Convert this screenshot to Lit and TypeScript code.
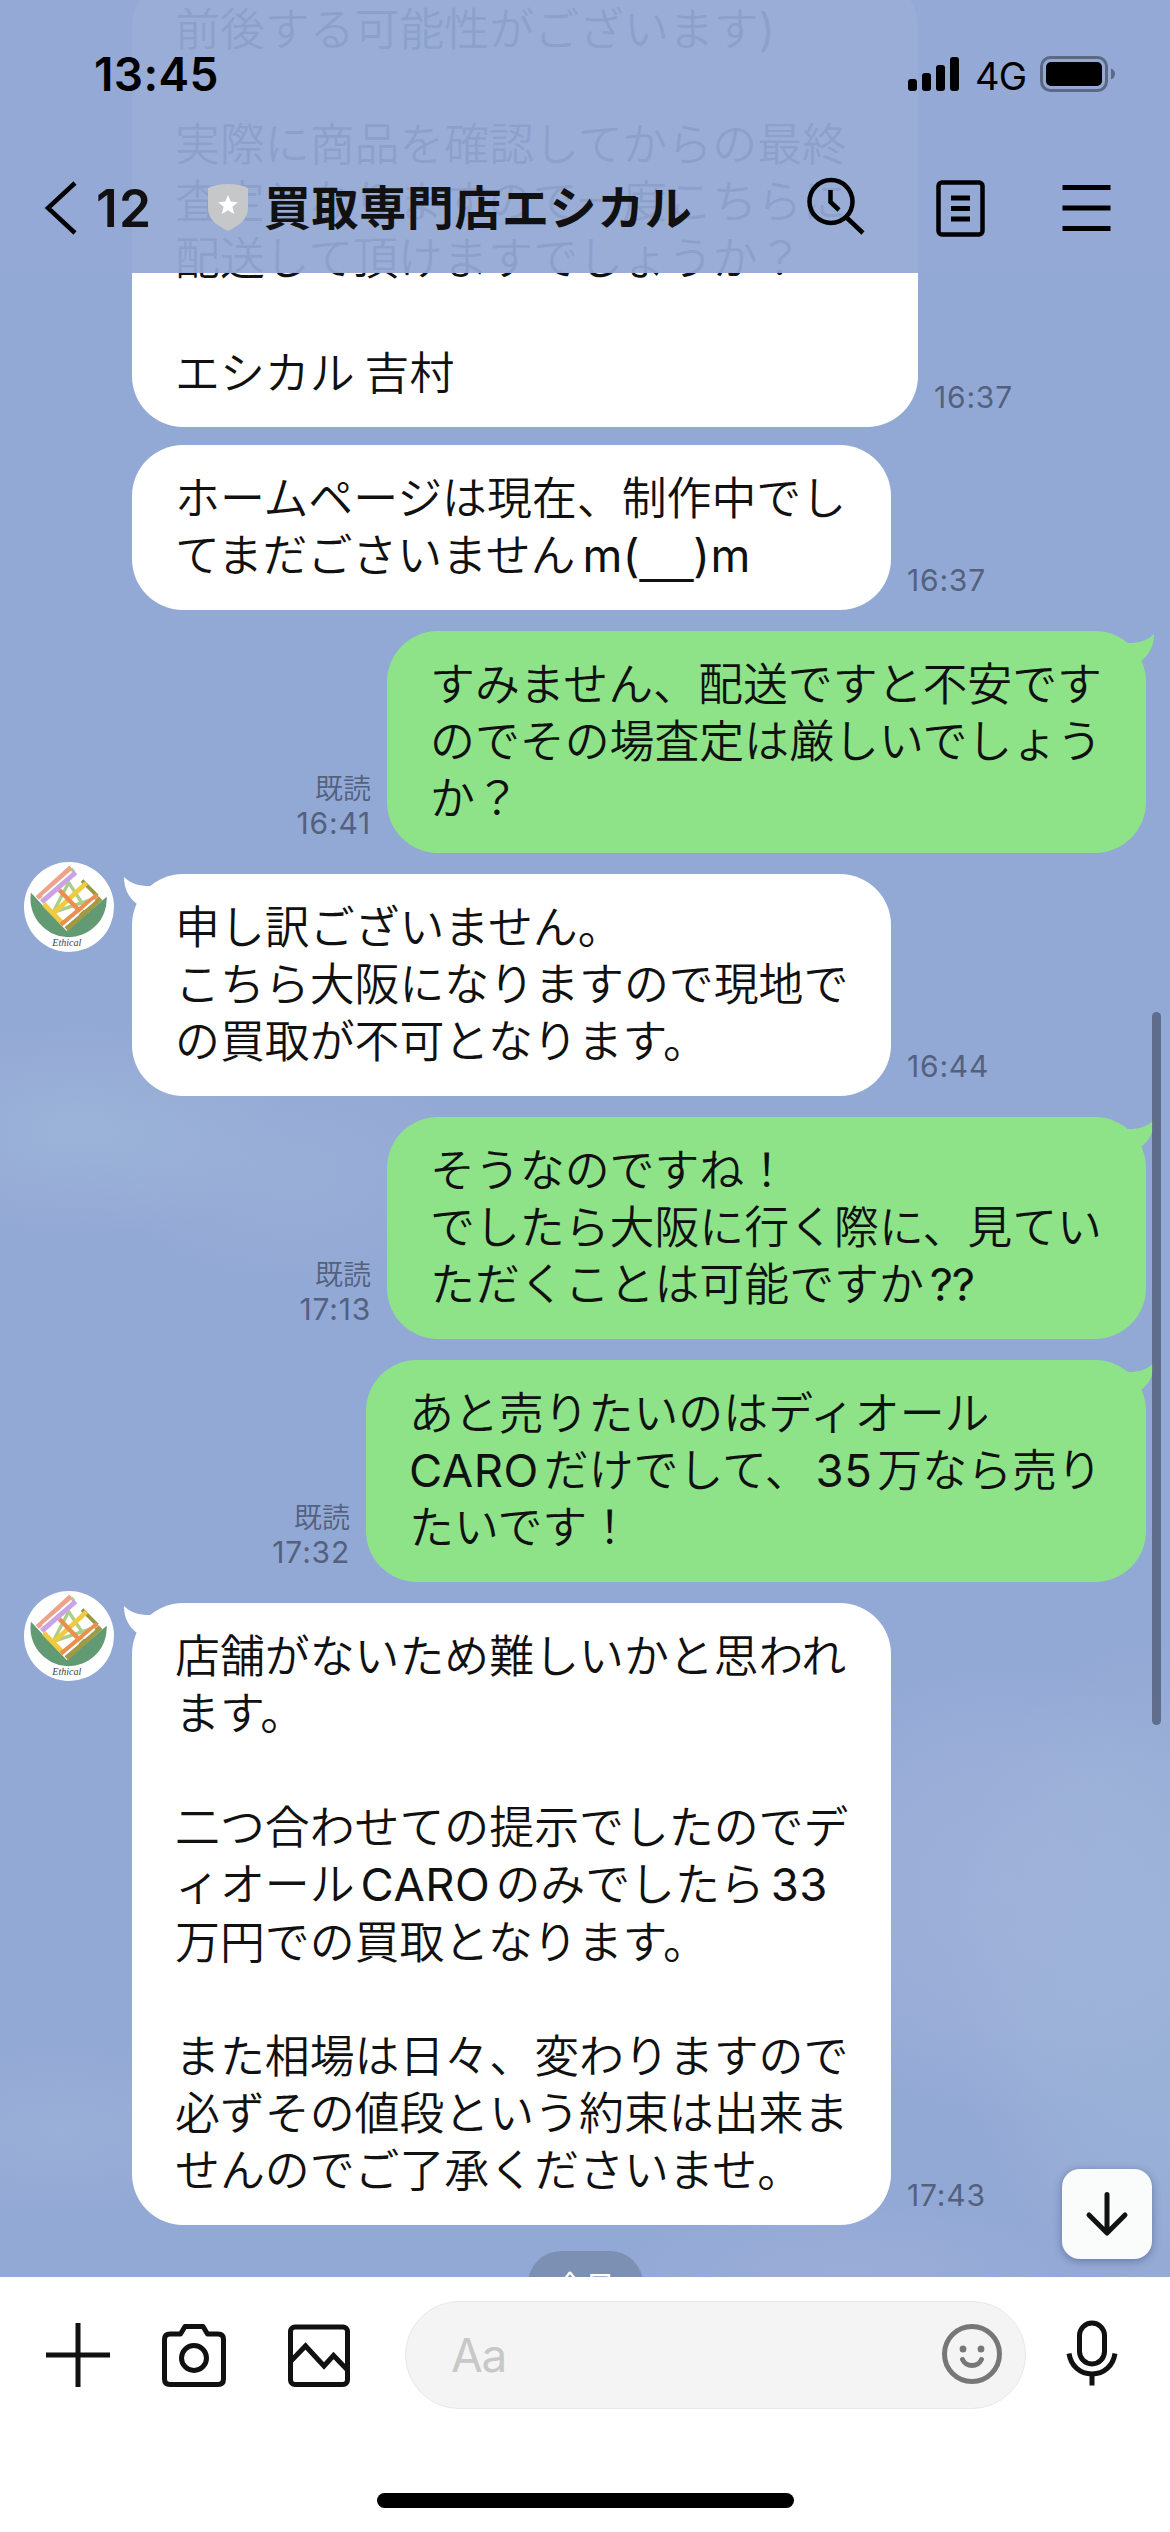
import { LitElement, html, svg, css } from "lit";
import { customElement, property } from "lit/decorators.js";
import { styleMap } from "lit/directives/style-map.js";
import { classMap } from "lit/directives/class-map.js";

interface Message {
  side: "in" | "out";
  width: number;
  time: string;
  lines: string[];
  avatar?: boolean;
  tail?: boolean;
}

const MESSAGES: Message[] = [
  {
    side: "in",
    width: 786,
    time: "16:37",
    lines: [
      "前後する可能性がございます)",
      "",
      "実際に商品を確認してからの最終",
      "査定となりますので一度こちらに",
      "配送して頂けますでしょうか？",
      "",
      "エシカル 吉村",
    ],
  },
  {
    side: "in",
    width: 759,
    time: "16:37",
    lines: ["ホームページは現在、制作中でし", "てまだごさいませんm(__)m"],
  },
  {
    side: "out",
    width: 759,
    time: "16:41",
    tail: true,
    lines: ["すみません、配送ですと不安です", "のでその場査定は厳しいでしょう", "か？"],
  },
  {
    side: "in",
    width: 759,
    time: "16:44",
    tail: true,
    avatar: true,
    lines: ["申し訳ございません。", "こちら大阪になりますので現地で", "の買取が不可となります。"],
  },
  {
    side: "out",
    width: 759,
    time: "17:13",
    tail: true,
    lines: ["そうなのですね！", "でしたら大阪に行く際に、見てい", "ただくことは可能ですか??"],
  },
  {
    side: "out",
    width: 780,
    time: "17:32",
    tail: true,
    lines: ["あと売りたいのはディオール", "CAROだけでして、35万なら売り", "たいです！"],
  },
  {
    side: "in",
    width: 759,
    time: "17:43",
    tail: true,
    avatar: true,
    lines: [
      "店舗がないため難しいかと思われ",
      "ます。",
      "",
      "二つ合わせての提示でしたのでデ",
      "ィオールCAROのみでしたら33",
      "万円での買取となります。",
      "",
      "また相場は日々、変わりますので",
      "必ずその値段という約束は出来ま",
      "せんのでご了承くださいませ。",
    ],
  },
];

const LATIN = /([A-Za-z0-9()?]+|_+)/;

@customElement("shop-avatar")
class ShopAvatar extends LitElement {
  static styles = css`
    :host { display: block; width: 90px; height: 90px; }
    .art { display: block; width: 90px; height: 90px; }
    .name { font-family: "Liberation Serif", serif; font-style: italic; font-size: 32px; fill: #444; }
  `;
  render() {
    return html`<svg class="art" viewBox="42 36 270 270">
      <circle cx="177" cy="171" r="135" fill="#fff" />
      <path d="M63 128L170 243L290 140A114.400 114.400 0 1 1 63 128Z" fill="#629a73" />
      <g fill="none">
        <path d="M80 142L172 240L274 148L192 60Z" fill="#fff" />
        <path d="M178 94L128 190M176 98L222 168M128 188L246 148" stroke="#a9cf86" stroke-width="10" />
        <path d="M82 144L183 52" stroke="#eda387" stroke-width="15" />
        <path d="M184 56L192 66" stroke="#a9cf86" stroke-width="9" />
        <path d="M95 156L197 67" stroke="#c9a3e3" stroke-width="15" />
        <path d="M98 139L180 69" stroke="#fff" stroke-width="5" />
        <path d="M216 92L262 138" stroke="#94993f" stroke-width="11" />
        <path d="M101 162L160 222M130 190L229 99" stroke="#f0cb40" stroke-width="14" />
        <path d="M169 238L272 145" stroke="#a09a45" stroke-width="16" />
        <path d="M148 120L208 182M153 224L262 134" stroke="#e98f50" stroke-width="13" />
        <path d="M170 222L206 192M222 178L254 150" stroke="#fff" stroke-width="6" />
      </g>
      <text class="name" x="127" y="287" textLength="87" lengthAdjust="spacingAndGlyphs">Ethical</text>
    </svg>`;
  }
}

@customElement("chat-message")
class ChatMessage extends LitElement {
  @property({ attribute: false }) message!: Message;

  static styles = css`
    :host { display: block; }
    .row { display: flex; align-items: stretch; }
    .row.out { justify-content: flex-end; padding-right: 24px; }
    .gutter { width: 132px; flex: none; padding-left: 24px; box-sizing: border-box; }
    .avatar { margin-top: -12px; }
    .bubble {
      position: relative;
      flex: none;
      box-sizing: border-box;
      padding: 22px 0 28.4px 43px;
      border-radius: 51px;
      background: #fff;
      color: #111;
    }
    .out .bubble { background: #8ee389; }
    .line {
      height: 57.2px;
      line-height: 57.2px;
      font-size: 44.9px;
      font-weight: 350;
      white-space: pre;
      font-family: "Noto Sans CJK JP", sans-serif;
    }
    .latin { font-family: Inter, sans-serif; font-weight: 400; font-size: 45.5px; margin: 0 5px 0 6px; letter-spacing: 0.5px; }
    .latin.first { margin-left: 0; }
    .latin.tight { margin-left: 0; }
    .latin.open { margin-left: 7px; margin-right: 0; }
    .latin.rule { font-family: "Liberation Sans", sans-serif; font-size: 48px; margin: 0; letter-spacing: 0; }
    .latin.narrow { letter-spacing: -1.2px; }
    .tail { position: absolute; top: 0; left: -8px; width: 40px; height: 40px; fill: #fff; }
    .out .tail { left: auto; right: -8px; transform: scaleX(-1); fill: #8ee389; }
    .meta {
      display: flex;
      flex-direction: column;
      justify-content: flex-end;
      padding: 0 16px 12px;
      font-family: Inter, "Noto Sans CJK JP", sans-serif;
      font-size: 30px;
      line-height: 36px;
      color: #53617f;
    }
    .time { letter-spacing: 0.8px; }
    .out .meta { text-align: right; }
    .read { font-size: 28px; font-weight: 350; font-family: "Noto Sans CJK JP", sans-serif; }
  `;

  private line(text: string) {
    const parts = text.split(LATIN).filter((p) => p !== "");
    return html`<div class="line">${parts.map((p, i) =>
      LATIN.test(p)
        ? html`<span
            class=${classMap({
              latin: true,
              first: i === 0,
              tight: p.startsWith(")"),
              open: p.endsWith("("),
              rule: p.startsWith("_"),
              narrow: p === "??",
            })}
            >${p}</span
          >`
        : p
    )}</div>`;
  }

  render() {
    const m = this.message;
    const out = m.side === "out";
    const bubble = html`<div class="bubble" style=${styleMap({ width: `${m.width}px` })}>
      ${m.tail
        ? html`<svg class="tail" viewBox="-8 0 40 40"><path d="M-8 3C-1 10 8 12.300 19 12L31 22L5 30C-4 23 -8 14 -8 3Z" /></svg>`
        : ""}
      ${m.lines.map((l) => this.line(l))}
    </div>`;
    const meta = html`<div class="meta">
      ${out ? html`<div class="read">既読</div>` : ""}
      <div class="time">${m.time}</div>
    </div>`;
    return html`<div class=${classMap({ row: true, out })}>
      ${out
        ? html`${meta}${bubble}`
        : html`<div class="gutter">${m.avatar ? html`<shop-avatar class="avatar"></shop-avatar>` : ""}</div>
            ${bubble}${meta}`}
    </div>`;
  }
}

const bars = [
  [0, 22, 12],
  [14, 16, 18],
  [28, 8, 26],
  [42, 0, 34],
];

@customElement("app-root")
class AppRoot extends LitElement {
  static styles = css`
    :host { display: block; }
    .screen {
      position: relative;
      display: flex;
      flex-direction: column;
      width: 1170px;
      height: 2532px;
      overflow: hidden;
      font-family: Inter, "Noto Sans CJK JP", sans-serif;
      background: #fff;
    }
    .chat {
      flex: 1;
      min-height: 0;
      overflow: hidden;
      display: flex;
      flex-direction: column;
      justify-content: flex-end;
      gap: 21px;
      background:
        radial-gradient(ellipse 230px 230px at 1000px 1890px, rgba(168, 185, 222, 0.45), rgba(168, 185, 222, 0.28) 60%, transparent),
        radial-gradient(ellipse 200px 340px at 1150px 1970px, rgba(160, 184, 218, 0.6), rgba(160, 184, 218, 0.38) 60%, transparent),
        radial-gradient(ellipse 240px 70px at 850px 2270px, rgba(165, 178, 220, 0.4), transparent),
        radial-gradient(ellipse 210px 110px at 80px 1130px, rgba(163, 187, 220, 0.55), transparent),
        radial-gradient(ellipse 200px 120px at 290px 1170px, rgba(160, 182, 218, 0.45), transparent),
        radial-gradient(ellipse 190px 90px at 60px 2130px, rgba(160, 182, 218, 0.5), transparent),
        #93a9d5;
    }
    .joined { margin-top: -3px; }
    .day {
      flex: none;
      align-self: center;
      width: 115px;
      height: 66px;
      margin: 5px 0 -40px;
      border-radius: 33px;
      background: #7c90b4;
      color: #fff;
      font: 400 30px/66px "Noto Sans CJK JP", sans-serif;
      text-align: center;
    }
    .top {
      position: absolute;
      inset: 0 0 auto 0;
      height: 273px;
      background: rgba(147, 169, 213, 0.95);
    }
    .status {
      display: flex;
      align-items: center;
      height: 120px;
      padding: 28px 55px 0 94px;
      box-sizing: border-box;
      color: #000;
    }
    .clock { flex: 1; font-size: 46px; font-weight: 600; letter-spacing: 0.4px; line-height: 60px; }
    .signal { width: 51px; height: 34px; margin-right: 16px; }
    .net { font-size: 38px; line-height: 60px; letter-spacing: -1px; margin-right: 14px; padding-top: 4px; }
    .battery { width: 75px; height: 36px; }
    .nav {
      display: flex;
      align-items: center;
      height: 60px;
      margin-top: 58px;
      padding: 0 59px 0 44px;
      color: #111;
    }
    .back { width: 34px; height: 54px; }
    .count { width: 112px; margin-left: 18px; font-size: 51.5px; font-weight: 600; letter-spacing: 1.2px; line-height: 60px; }
    .shield { width: 40px; height: 48px; margin-top: -2px; }
    .title { flex: 1; margin: -7px 0 0 16px; font: 700 47px/60px "Noto Sans CJK JP", sans-serif; letter-spacing: 0.6px; white-space: nowrap; }
    .search { width: 58px; height: 58px; margin-right: 71px; margin-top: -4px; }
    .note { width: 49px; height: 57px; margin-right: 77px; }
    .menu { width: 49px; height: 46px; }
    .composer {
      flex: none;
      height: 255px;
      box-sizing: border-box;
      padding-top: 24px;
      background: #fff;
      display: flex;
      flex-direction: column;
    }
    .tools { display: flex; align-items: center; height: 108px; padding-left: 46px; }
    .plus { width: 64px; height: 64px; margin-right: 52px; }
    .camera { width: 64px; height: 64px; margin-right: 62px; }
    .photo { width: 62px; height: 64px; margin-right: 55px; }
    .field {
      display: flex;
      align-items: center;
      justify-content: space-between;
      width: 621px;
      height: 108px;
      box-sizing: border-box;
      padding: 0 23px 0 45px;
      margin-right: 40px;
      border: 1.5px solid #e8e8e8;
      border-radius: 54px;
      background: #f4f4f4;
    }
    .hint { font-size: 46px; color: #c8c8c8; letter-spacing: -1.2px; }
    .smile { width: 60px; height: 60px; margin-top: -3px; }
    .mic { width: 52px; height: 66px; margin-top: -4px; }
    .home { width: 417px; height: 15px; margin: 84px auto 0; border-radius: 8px; background: #000; }
    .thumb {
      position: absolute;
      left: 1152px;
      top: 1012px;
      width: 9px;
      height: 713px;
      border-radius: 5px;
      background: rgba(72, 82, 108, 0.7);
    }
    .down {
      position: absolute;
      left: 1062px;
      top: 2169px;
      width: 90px;
      height: 90px;
      border-radius: 18px;
      background: #fafcfc;
      box-shadow: 0 2px 9px rgba(40, 55, 95, 0.45);
    }
    .icon { display: block; flex: none; fill: none; stroke: #111; stroke-width: 5; overflow: visible; }
    .black { stroke: #000; }
  `;

  render() {
    return html`<div class="screen">
      <main class="chat">
        ${MESSAGES.map((m, i) => html`<chat-message class=${classMap({ joined: i === 1 })} .message=${m}></chat-message>`)}
        <div class="day">今日</div>
      </main>

      <footer class="composer">
        <div class="tools">
          <svg class="icon plus" viewBox="0 0 64 64"><path d="M32 0V64M0 32H64" /></svg>
          <svg class="icon camera" viewBox="0 0 64 64">
            <path stroke-linejoin="round" d="M23 3.500H41L45.500 11H56Q61.500 11 61.500 16.500V56Q61.500 61.500 56 61.500H8Q2.500 61.500 2.500 56V16.500Q2.500 11 8 11H18.500Z" />
            <circle cx="32" cy="35" r="12.500" />
          </svg>
          <svg class="icon photo" viewBox="0 0 62 64">
            <rect x="2.500" y="4" width="57" height="57.500" rx="4.500" />
            <path d="M3 38L17.500 23L36 43L45.500 32.500L59 46.500" />
          </svg>
          <div class="field">
            <span class="hint">Aa</span>
            <svg class="icon smile" viewBox="0 0 60 60">
              <g stroke="#777" stroke-linecap="round">
                <circle cx="30" cy="30" r="27.500" />
                <path d="M20.500 35.500Q23.500 41.500 30 41.500T39.500 35.500" />
              </g>
              <ellipse cx="21" cy="25" rx="3.400" ry="3.600" fill="#777" stroke="none" />
              <ellipse cx="39" cy="25" rx="3.400" ry="3.600" fill="#777" stroke="none" />
            </svg>
          </div>
          <svg class="icon mic" viewBox="0 0 52 66">
            <rect x="13.500" y="3" width="25" height="41" rx="12.500" />
            <path d="M3 33.500C5 46 14 54 26 54S47 46 49 33.500M26 54V65.500" />
          </svg>
        </div>
        <div class="home"></div>
      </footer>

      <div class="thumb"></div>
      <div class="down">
        <svg class="icon" width="90" height="90" viewBox="0 0 90 90">
          <path stroke-linecap="round" stroke-linejoin="round" d="M45 25.500V63M27 46L45 64L63 46" />
        </svg>
      </div>

      <header class="top">
        <div class="status">
          <div class="clock">13:45</div>
          <svg class="signal" viewBox="0 0 51 34">
            ${bars.map(([x, y, h]) => svg`<rect x=${x} y=${y} width="9" height=${h} rx="3" />`)}
          </svg>
          <div class="net">4G</div>
          <svg class="battery" viewBox="0 0 75 36">
            <rect x="1.500" y="1.500" width="65" height="33" rx="9" fill="none" stroke="#5b6984" stroke-width="3" />
            <rect x="6" y="6" width="56" height="24" rx="5" />
            <path d="M71 12.500Q75 14 75 18T71 23.500Z" fill="#5b6984" />
          </svg>
        </div>
        <nav class="nav">
          <svg class="icon black back" viewBox="0 0 34 54"><path d="M31 2L4 27L31 52" stroke-width="4.500" /></svg>
          <div class="count">12</div>
          <svg class="shield" viewBox="0 0 40 48">
            <path fill="#c6c7c9" d="M20 1C28 1 34 2.500 40 5V25C40 36 31 43 20 48C9 43 0 36 0 25V5C6 2.500 12 1 20 1Z" />
            <path fill="#fff" d="M20 12L22.700 18.600L29.800 19.200L24.400 23.800L26.100 31L20 27.200L13.900 31L15.600 23.800L10.200 19.200L17.300 18.600Z" />
          </svg>
          <div class="title">買取専門店エシカル</div>
          <svg class="icon black search" viewBox="0 0 58 58">
            <circle cx="24" cy="24.500" r="21.500" stroke-width="4.500" />
            <path stroke-width="4.500" d="M23.500 13V25L32 33M39.500 40.500L56 56" />
          </svg>
          <svg class="icon black note" viewBox="0 0 49 57">
            <rect x="2.500" y="2.500" width="44" height="52" rx="3.500" stroke-width="4.500" />
            <path d="M15 18H34M15 28.500H34M15 39H34" />
          </svg>
          <svg class="icon black menu" viewBox="0 0 49 46"><path d="M0.500 2.500H48.500M0.500 23H48.500M0.500 43.500H48.500" /></svg>
        </nav>
      </header>
    </div>`;
  }
}
